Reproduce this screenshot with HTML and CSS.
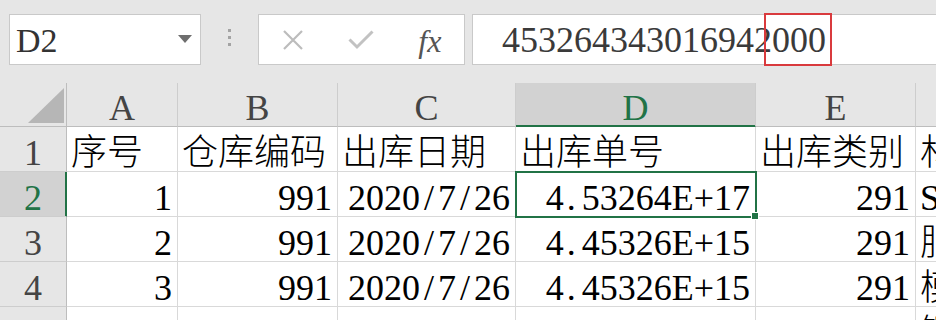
FILE: index.html
```html
<!DOCTYPE html>
<html lang="zh-CN">
<head>
<meta charset="utf-8">
<title>Excel</title>
<link rel="stylesheet" href="styles.css">
</head>
<body>
<div class="toolbar">
  <div class="namebox">
    <span class="nb-text">D2</span>
    <span class="nb-arrow"></span>
  </div>
  <div class="sep"><span class="dot"></span><span class="dot"></span><span class="dot"></span></div>
  <div class="fbtns">
    <div class="slot">
      <svg width="22" height="22" viewBox="0 0 22 22"><path d="M2 2 L20 20 M20 2 L2 20" stroke="#bcbcbc" stroke-width="2.2" fill="none"/></svg>
    </div>
    <div class="slot">
      <svg width="26" height="20" viewBox="0 0 26 20"><path d="M1.5 9.5 L9 17 L24.5 1.5" stroke="#c2c2c2" stroke-width="3" fill="none"/></svg>
    </div>
    <div class="slot"><span class="fx">fx</span></div>
  </div>
  <div class="finput">
    <span class="ftext">453264343016942000</span>
    <div class="redbox"></div>
  </div>
</div>
<div class="sheet">
  <div class="h corner"><svg width="36" height="35" viewBox="0 0 36 35"><polygon points="36,0 36,35 0,35" fill="#b6b6b6"/></svg></div>
  <div class="h">A</div>
  <div class="h">B</div>
  <div class="h">C</div>
  <div class="h hsel">D</div>
  <div class="h">E</div>
  <div class="h">F</div>

  <div class="rh">1</div>
  <div class="c cjk">序号</div>
  <div class="c cjk">仓库编码</div>
  <div class="c cjk">出库日期</div>
  <div class="c cjk">出库单号</div>
  <div class="c cjk">出库类别</div>
  <div class="c cjk">材料名称</div>

  <div class="rh rhsel">2</div>
  <div class="c r">1</div>
  <div class="c r">991</div>
  <div class="c r">2020<span class="m">/</span>7<span class="m">/</span>26</div>
  <div class="c r active">4<span class="m dp">.</span>53264E+17</div>
  <div class="c r">291</div>
  <div class="c">SD-01</div>

  <div class="rh">3</div>
  <div class="c r">2</div>
  <div class="c r">991</div>
  <div class="c r">2020<span class="m">/</span>7<span class="m">/</span>26</div>
  <div class="c r">4<span class="m dp">.</span>45326E+15</div>
  <div class="c r">291</div>
  <div class="c cjk">肥料</div>

  <div class="rh">4</div>
  <div class="c r">3</div>
  <div class="c r">991</div>
  <div class="c r">2020<span class="m">/</span>7<span class="m">/</span>26</div>
  <div class="c r">4<span class="m dp">.</span>45326E+15</div>
  <div class="c r">291</div>
  <div class="c cjk">模具</div>

  <div class="rh">5</div>
  <div class="c r">4</div>
  <div class="c r">991</div>
  <div class="c r">2020<span class="m">/</span>7<span class="m">/</span>26</div>
  <div class="c r">4<span class="m dp">.</span>45326E+15</div>
  <div class="c r">291</div>
  <div class="c cjk">钢材</div>
</div>
</body>
</html>
```
FILE: styles.css
```css
html, body {
  margin: 0;
  padding: 0;
  overflow: hidden;
  background: #e6e6e6;
}
body {
  width: 936px;
  height: 320px;
  font-family: "Liberation Serif", "Noto Sans CJK SC", serif;
  font-size: 36px;
  color: #000;
}
.toolbar {
  display: flex;
  align-items: flex-start;
  height: 83px;
  box-sizing: border-box;
  padding: 14px 0 0 9px;
  background: #e6e6e6;
}
.namebox {
  width: 192px;
  height: 51px;
  box-sizing: border-box;
  border: 1px solid #c9c9c9;
  background: #fff;
  display: flex;
  align-items: flex-start;
  justify-content: space-between;
  padding: 2px 8px 0 6px;
}
.nb-text {
  font-size: 34px;
  line-height: 47px;
  color: #333;
}
.nb-arrow {
  margin-top: 18px;
  width: 0;
  height: 0;
  border-left: 7px solid transparent;
  border-right: 7px solid transparent;
  border-top: 8px solid #6e6e6e;
}
.sep {
  width: 57px;
  height: 51px;
  display: flex;
  flex-direction: column;
  align-items: center;
  padding-top: 15px;
  box-sizing: border-box;
  gap: 4px;
}
.dot {
  width: 3px;
  height: 3px;
  background: #a3a3a3;
}
.fbtns {
  width: 207px;
  height: 51px;
  box-sizing: border-box;
  border: 1px solid #c9c9c9;
  background: #fff;
  display: flex;
}
.slot {
  width: 69px;
  display: flex;
  align-items: center;
  justify-content: center;
}
.fx {
  font-family: "Liberation Serif", serif;
  font-style: italic;
  font-size: 32px;
  color: #555;
  line-height: 1;
  margin-top: 2px;
}
.finput {
  position: relative;
  flex: 1;
  margin-left: 7px;
  height: 51px;
  box-sizing: border-box;
  border: 1px solid #c9c9c9;
  border-right: none;
  background: #fff;
  padding: 2px 0 0 29px;
}
.ftext {
  font-size: 36px;
  line-height: 47px;
  color: #3a3a3a;
  white-space: nowrap;
}
.redbox {
  position: absolute;
  left: 291px;
  top: -2px;
  width: 68px;
  height: 53px;
  box-sizing: border-box;
  border: 2px solid #d93a3d;
}
.sheet {
  display: grid;
  grid-template-columns: 67px 111px 160px 178px 240px 160px 200px;
  grid-template-rows: 44px repeat(5, 45px);
}
.sheet > div {
  box-sizing: border-box;
  white-space: nowrap;
  min-width: 0;
}
.h {
  background: #e6e6e6;
  border-right: 1px solid #cdcdcd;
  border-bottom: 1px solid #bdbdbd;
  text-align: center;
  line-height: 50px;
  color: #444;
}
.corner {
  display: flex;
  justify-content: flex-end;
  align-items: flex-end;
  padding: 0 2px 3px 0;
  border-right-color: #bdbdbd;
}
.hsel {
  background: #d2d2d2;
  color: #217346;
  border-bottom-color: #217346;
  box-shadow: inset 0 -1px 0 #217346;
}
.rh {
  background: #e6e6e6;
  border-right: 1px solid #bdbdbd;
  border-bottom: 1px solid #cdcdcd;
  text-align: center;
  line-height: 52px;
  color: #444;
}
.rhsel {
  background: #d2d2d2;
  color: #217346;
  border-right-color: #217346;
  box-shadow: inset -1px 0 0 #217346;
}
.c {
  background: #fff;
  border-right: 1px solid #d9d9d9;
  border-bottom: 1px solid #d9d9d9;
  line-height: 52px;
  padding: 0 5px 0 4px;
}
.cjk {
  font-family: "Noto Sans CJK SC", sans-serif;
  font-weight: 300;
  line-height: 44px;
}
.r {
  text-align: right;
}
.m {
  display: inline-block;
  width: 0.5em;
  text-align: center;
}
.m.dp {
  text-align: left;
  padding-left: 3px;
  box-sizing: border-box;
}
.active {
  position: relative;
  outline: 2px solid #217346;
  outline-offset: -1px;
}
.active::after {
  content: "";
  position: absolute;
  left: 235px;
  top: 40px;
  width: 6px;
  height: 6px;
  background: #217346;
  border: 1px solid #fff;
}
```
